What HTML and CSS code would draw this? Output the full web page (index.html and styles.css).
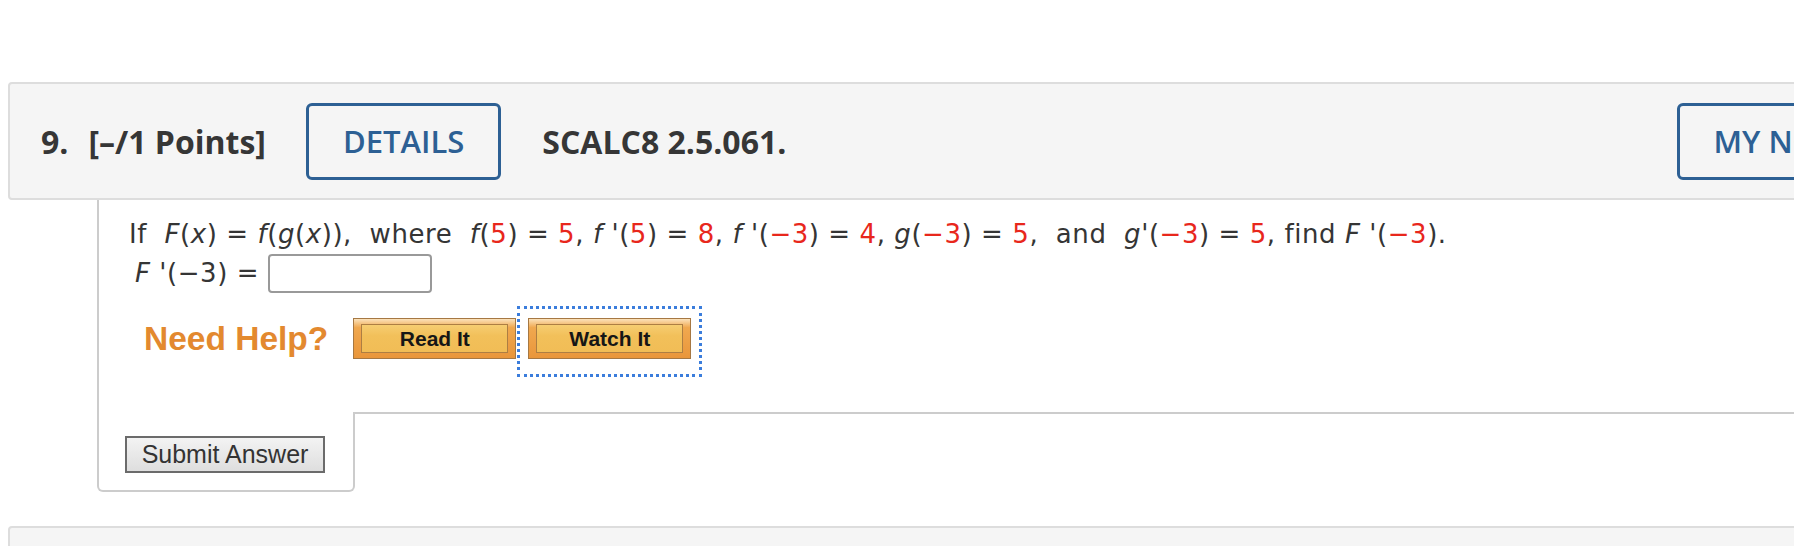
FILE: index.html
```html
<!DOCTYPE html>
<html lang="en">
<head>
<meta charset="utf-8">
<title>SCALC8 2.5.061</title>
<link rel="stylesheet" href="styles.css">
</head>
<body>
<div class="page">
  <section class="question">
    <header class="q-head">
      <span class="q-num">9.</span>
      <span class="q-pts">[–/1 Points]</span>
      <button class="btn-outline">DETAILS</button>
      <span class="q-id">SCALC8 2.5.061.</span>
      <button class="btn-outline notes">MY NOTES</button>
    </header>
    <div class="q-body">
      <div class="q-content">
        <p class="prompt">If&nbsp; <i>F</i>(<i>x</i>) = <i>f</i>(<i>g</i>(<i>x</i>)),&nbsp; where&nbsp; <i>f</i>(<span class="num">5</span>) = <span class="num">5</span>, <i>f</i> '(<span class="num">5</span>) = <span class="num">8</span>, <i>f</i> '(<span class="num">−3</span>) = <span class="num">4</span>, <i>g</i>(<span class="num">−3</span>) = <span class="num">5</span>,&nbsp; and&nbsp; <i>g</i>'(<span class="num">−3</span>) = <span class="num">5</span>, find <i>F</i> '(<span class="num">−3</span>).</p>
        <p class="answer-line"><i>F</i> '(−3) = <input class="answer" type="text" aria-label="answer"></p>
        <div class="help">
          <span class="need-help">Need Help?</span>
          <a class="help-link"><span class="help-btn"><span class="help-inner">Read It</span></span></a>
          <a class="help-link focused"><span class="help-btn"><span class="help-inner">Watch It</span></span></a>
        </div>
      </div>
      <div class="q-foot">
        <div class="submit-cell"><button class="submit">Submit Answer</button></div>
        <div class="foot-rest"></div>
      </div>
    </div>
  </section>
  <section class="question next">
    <header class="q-head"></header>
  </section>
</div>
</body>
</html>
```

FILE: styles.css
```css
html, body {
  margin: 0;
  padding: 0;
  background: #ffffff;
  overflow: hidden;
}

.page {
  width: 1950px;
  padding: 82px 0 0 8px;
}

.question {
  width: 1942px;
}

.q-head {
  box-sizing: border-box;
  height: 118px;
  display: flex;
  align-items: center;
  padding-left: 31px;
  background: #f5f5f5;
  border: 2px solid #dddddd;
  border-radius: 4px;
  font-family: "Open Sans", "Liberation Sans", sans-serif;
  font-weight: 700;
  font-size: 32px;
  color: #363636;
}

.q-num {
  margin-right: 20px;
}

.q-pts {
  margin-right: 40px;
}

.btn-outline {
  box-sizing: border-box;
  height: 77px;
  padding: 0 34px;
  background: transparent;
  border: 3px solid #2d6094;
  border-radius: 6px;
  font-family: "Open Sans", "Liberation Sans", sans-serif;
  font-weight: 600;
  font-size: 31px;
  color: #2d6094;
}

.q-id {
  margin-left: 41px;
  flex: 1;
}

.notes {
  margin-right: 42px;
}

.q-body {
  margin-left: 89px;
}

.q-content {
  border-left: 2px solid #cccccc;
  padding: 15px 0 53px 30px;
  font-family: "DejaVu Sans", Verdana, sans-serif;
  font-size: 26px;
  letter-spacing: 0.56px;
  line-height: 39px;
  color: #353535;
}

.q-content p {
  margin: 0;
}

.answer-line {
  padding-left: 6px;
}

.num {
  color: #e8271c;
}

.answer {
  box-sizing: border-box;
  width: 164px;
  height: 39px;
  margin: 0;
  vertical-align: top;
  border: 2px solid #999999;
  border-radius: 4px;
  background: #ffffff;
}

.help {
  display: flex;
  align-items: center;
  margin-top: 25px;
  padding-left: 15px;
}

.need-help {
  font-family: "Liberation Sans", Arial, sans-serif;
  font-weight: 700;
  font-size: 33.5px;
  letter-spacing: 0;
  color: #e3892f;
  margin-right: 25px;
}

.help-link {
  display: block;
}

.help-link.focused {
  margin: -9px -8px -15px 4px;
  padding: 9px 8px 15px 8px;
  outline: 3px dotted #3b7ddc;
}

.help-btn {
  box-sizing: border-box;
  display: flex;
  width: 163px;
  height: 41px;
  padding: 5px 7px;
  border: 1px solid #a67843;
  background: linear-gradient(#fbe2bb 0%, #f0a84f 22%, #e9963b 100%);
}

.help-inner {
  box-sizing: border-box;
  flex: 1;
  display: flex;
  align-items: center;
  justify-content: center;
  border: 1px solid #ad7e43;
  background: linear-gradient(#f6cd72 0%, #f2c05a 40%, #f1bd56 100%);
  font-family: "Liberation Sans", Arial, sans-serif;
  font-weight: 700;
  font-size: 21px;
  letter-spacing: 0;
  color: #161616;
}

.q-foot {
  display: flex;
  align-items: flex-start;
}

.submit-cell {
  box-sizing: border-box;
  width: 258px;
  padding: 24px 0 17px 26px;
  border: 2px solid #cccccc;
  border-top: none;
  border-radius: 0 0 6px 6px;
}

.submit {
  display: block;
  box-sizing: border-box;
  width: 200px;
  height: 37px;
  margin: 0;
  padding: 0;
  border: 2px solid #6b6b6b;
  background: linear-gradient(#f3f3f3, #dedede);
  font-family: "Liberation Sans", Arial, sans-serif;
  font-size: 25px;
  color: #333333;
}

.foot-rest {
  flex: 1;
  border-top: 2px solid #cccccc;
}

.question.next {
  margin-top: 34px;
}
```
